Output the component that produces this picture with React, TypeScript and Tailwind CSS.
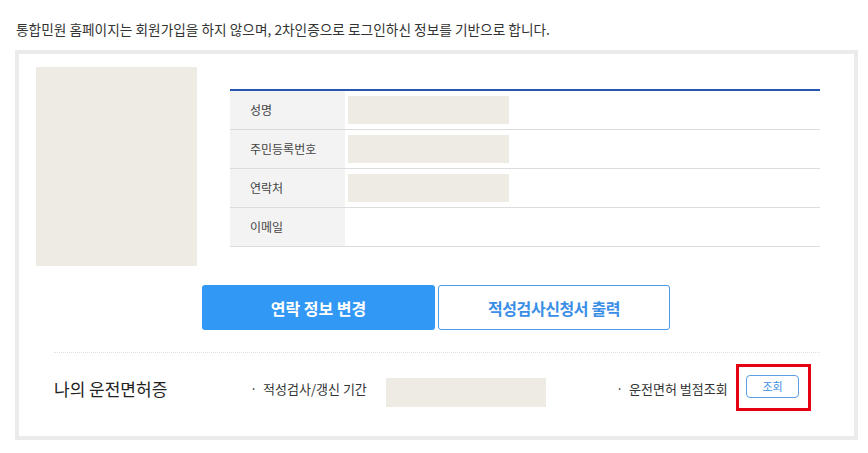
import React from 'react';

const font = { fontFamily: '"Noto Sans CJK KR", "Noto Sans", sans-serif' };

const rows = [
    { label: '성명', filled: true },
    { label: '주민등록번호', filled: true },
    { label: '연락처', filled: true },
    { label: '이메일', filled: false },
];

export default function App() {
    return (
        <div className="w-[868px] h-[453px] bg-white pt-[19px] pl-4 text-[#222]" style={font}>
            <p className="text-[13.7px] leading-5 text-[#333]">
                통합민원 홈페이지는 회원가입을 하지 않으며, 2차인증으로 로그인하신 정보를 기반으로 합니다.
            </p>

            <div className="mt-[11px] -ml-px w-[843px] h-[390px] border-4 border-[#ebebeb] bg-white">
                {/* profile + table */}
                <div className="flex pl-[17px] pt-[13px] pr-[34px]">
                    <div className="w-[161px] h-[199px] bg-[#edebe3]" />
                    <div className="flex-1 ml-[33px] mt-[22px] border-t-2 border-[#2457b0]">
                        {rows.map((r) => (
                            <div key={r.label} className="flex h-[39px] border-b border-[#dcdcdc]">
                                <div className="w-[115px] bg-[#f3f3f3] flex items-center pl-[20px] text-[12px] text-[#444]">
                                    {r.label}
                                </div>
                                <div className="flex items-center pl-[3px]">
                                    {r.filled && <div className="w-[161px] h-[28px] bg-[#edebe3]" />}
                                </div>
                            </div>
                        ))}
                    </div>
                </div>

                {/* buttons */}
                <div className="flex justify-center gap-[3px] mt-[19px] -ml-px">
                    <button className="w-[233px] h-[45px] rounded-[3px] bg-[#3298f5] text-white text-[16px] font-bold">
                        연락 정보 변경
                    </button>
                    <button className="w-[232px] h-[45px] rounded-[3px] border-[1.5px] border-[#4a9be9] bg-white text-[#3a8ee6] text-[16px] font-bold tracking-[-0.4px]">
                        적성검사신청서 출력
                    </button>
                </div>

                {/* license row */}
                <div className="mx-[35px] mr-[34px] mt-[22px] border-t border-dotted border-[#e0e0e0]" />
                <div className="flex items-start pl-[35px]">
                    <div className="w-[196px] mt-[24px] text-[17px] leading-6 text-[#222]">나의 운전면허증</div>
                    <div className="w-[136px] mt-[26px] text-[13px] leading-5 text-[#333]">·&nbsp; 적성검사/갱신 기간</div>
                    <div className="w-[160px] h-[29px] mt-[25px] bg-[#edebe3]" />
                    <div className="w-[120px] ml-[70px] mt-[26px] text-[13px] leading-5 text-[#333]">·&nbsp; 운전면허 벌점조회</div>
                    <div className="mt-[11px] w-[75px] h-[47px] border-[3px] border-[#e50012] flex items-start pl-[7px] pt-[8px]">
                        <button className="w-[53px] h-[23px] rounded-[4px] border border-[#5b9fe4] bg-white text-[11px] text-[#3a8ee6] leading-none">
                            조회
                        </button>
                    </div>
                </div>
            </div>
        </div>
    );
}
